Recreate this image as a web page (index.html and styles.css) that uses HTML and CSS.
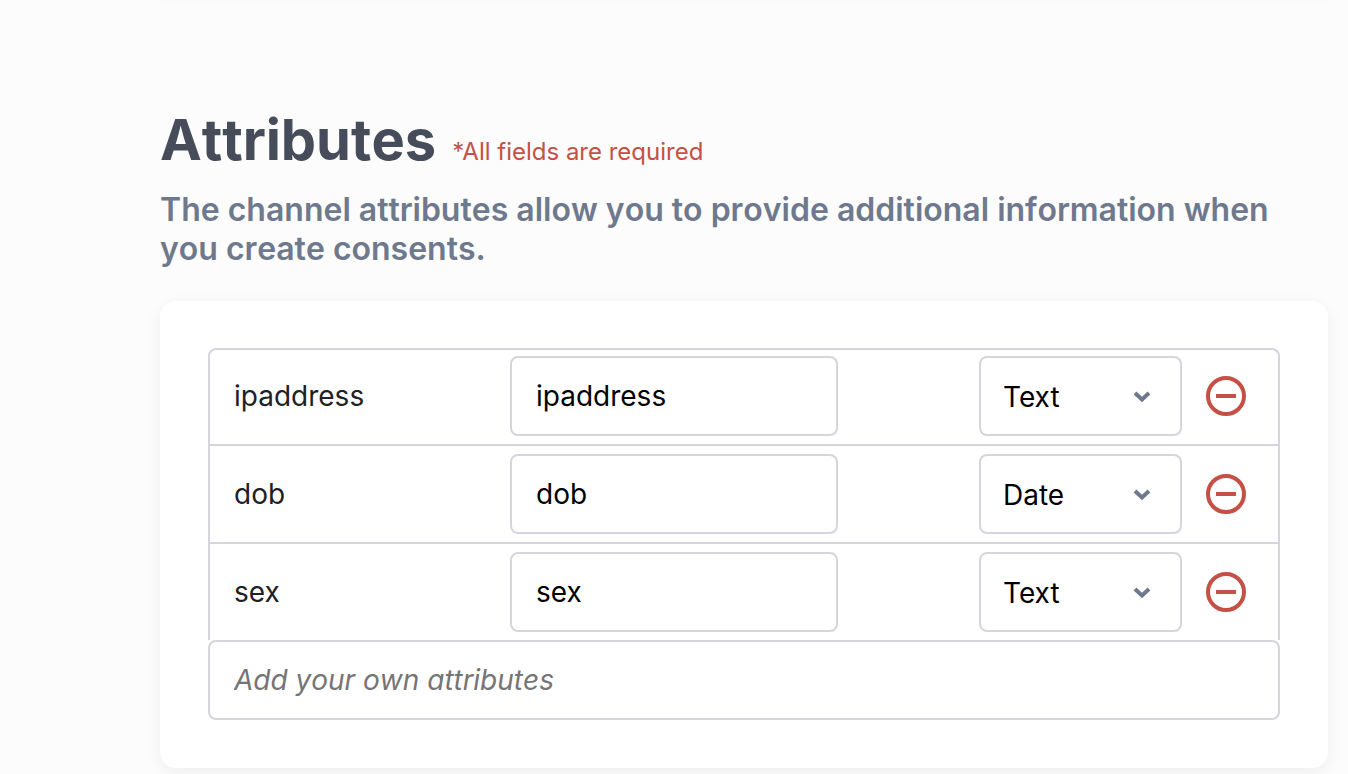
FILE: index.html
```html
<!DOCTYPE html>
<html lang="en">
<head>
<meta charset="utf-8">
<meta name="viewport" content="width=device-width, initial-scale=1">
<title>Attributes</title>
<link rel="stylesheet" href="styles.css">
</head>
<body>
<div class="previous-card"></div>
<main class="attributes">
  <header class="heading">
    <h1 class="title">Attributes</h1>
    <span class="required">*All fields are required</span>
  </header>
  <h2 class="description">The channel attributes allow you to provide additional information when you create consents.</h2>
  <form class="card">
    <ul class="rows">
      <li class="row">
        <label class="name" for="ipaddress">ipaddress</label>
        <input class="field" id="ipaddress" type="text" value="ipaddress">
        <span class="select-wrap">
          <select class="select" aria-label="Type of ipaddress"><option selected>Text</option><option>Date</option></select>
          <svg class="chevron" viewBox="0 0 20 14" aria-hidden="true"><path d="M3 3L10 9.500L17 3"/></svg>
        </span>
        <button class="remove" type="button" aria-label="Remove ipaddress"><svg class="remove-icon" viewBox="0 0 40 40" aria-hidden="true"><circle cx="20" cy="20" r="18"/><path d="M10 20H30"/></svg></button>
      </li>
      <li class="row">
        <label class="name" for="dob">dob</label>
        <input class="field" id="dob" type="text" value="dob">
        <span class="select-wrap">
          <select class="select" aria-label="Type of dob"><option>Text</option><option selected>Date</option></select>
          <svg class="chevron" viewBox="0 0 20 14" aria-hidden="true"><path d="M3 3L10 9.500L17 3"/></svg>
        </span>
        <button class="remove" type="button" aria-label="Remove dob"><svg class="remove-icon" viewBox="0 0 40 40" aria-hidden="true"><circle cx="20" cy="20" r="18"/><path d="M10 20H30"/></svg></button>
      </li>
      <li class="row">
        <label class="name" for="sex">sex</label>
        <input class="field" id="sex" type="text" value="sex">
        <span class="select-wrap">
          <select class="select" aria-label="Type of sex"><option selected>Text</option><option>Date</option></select>
          <svg class="chevron" viewBox="0 0 20 14" aria-hidden="true"><path d="M3 3L10 9.500L17 3"/></svg>
        </span>
        <button class="remove" type="button" aria-label="Remove sex"><svg class="remove-icon" viewBox="0 0 40 40" aria-hidden="true"><circle cx="20" cy="20" r="18"/><path d="M10 20H30"/></svg></button>
      </li>
    </ul>
    <input class="add" type="text" placeholder="Add your own attributes" aria-label="Add your own attributes">
  </form>
</main>
</body>
</html>
```
FILE: styles.css
```css
* {
  box-sizing: border-box;
}

body {
  margin: 0;
  background: #fcfcfc;
  color: #202124;
  font-family: Inter, "Liberation Sans", sans-serif;
  font-size: 28px;
  overflow: hidden;
}

.previous-card {
  height: 5px;
  margin: 0 20px 0 160px;
  border-radius: 0 0 16px 16px;
  background: #fafafa;
}

.attributes {
  padding: 99px 20px 6px 160px;
}

.heading {
  display: flex;
  align-items: baseline;
  gap: 16px;
}

.title {
  margin: 0;
  color: #464c59;
  font-size: 56px;
  line-height: 72px;
  font-weight: 700;
  font-kerning: none;
}

.required {
  color: #c55046;
  font-size: 24px;
}

.description {
  margin: 14px 0 0;
  color: #6e798d;
  font-size: 32px;
  line-height: 39px;
  font-weight: 600;
  font-kerning: none;
}

.card {
  margin-top: 33px;
  padding: 47px 48px 48px;
  background: #fff;
  border-radius: 16px;
  box-shadow: 0 4px 16px rgba(0, 0, 0, 0.06);
}

.rows {
  list-style: none;
  margin: 0;
  padding: 0;
  border: 2px solid #d6d5dc;
  border-bottom: 0;
  border-radius: 8px 8px 0 0;
}

.row {
  display: grid;
  grid-template-columns: 276px 328px 1fr 227px 40px;
  align-items: center;
  padding: 8px 32px 8px 24px;
}

.row:first-child {
  padding-top: 6px;
}

.row + .row {
  border-top: 2px solid #d6d5dc;
}

.field,
.select,
.add {
  width: 100%;
  height: 80px;
  padding: 0 24px;
  background: #fff;
  border: 2px solid #d6d5dc;
  border-radius: 8px;
  color: #000;
  font: inherit;
}

.select-wrap {
  position: relative;
  grid-column: 4;
  margin-right: 24px;
}

.select {
  display: block;
  padding: 2px 22px 0;
  appearance: none;
}

.chevron {
  position: absolute;
  top: 34px;
  right: 30px;
  width: 20px;
  height: 14px;
  fill: none;
  stroke: #6e798d;
  stroke-width: 4;
  pointer-events: none;
}

.remove {
  display: block;
  padding: 0;
  border: 0;
  background: none;
}

.remove-icon {
  display: block;
  width: 40px;
  height: 40px;
  fill: none;
  stroke: #c55046;
  stroke-width: 4;
}

.add {
  display: block;
  font-kerning: none;
}

.add::placeholder {
  color: #757575;
  font-style: italic;
  opacity: 1;
}
```
